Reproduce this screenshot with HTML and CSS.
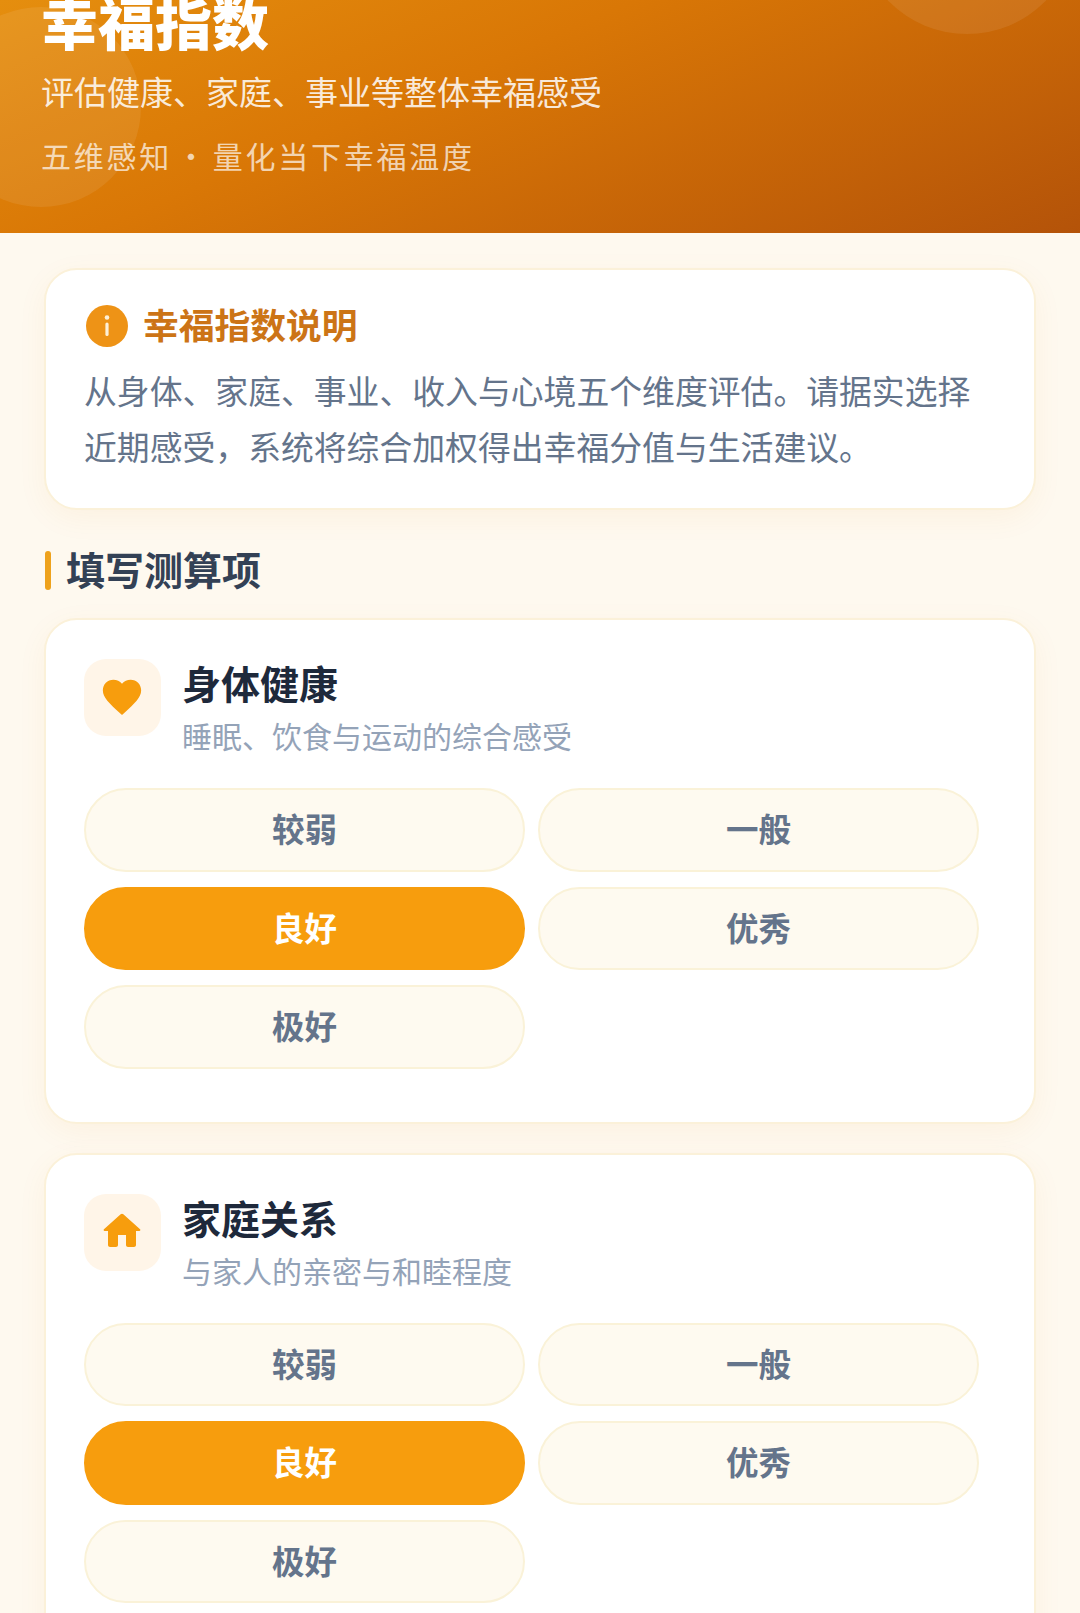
FILE: index.html
```html
<!DOCTYPE html>
<html lang="zh">

<head>
  <meta http-equiv="Content-Type" content="text/html; charset=UTF-8">
  <title>幸福指数</title>
  <link rel="stylesheet" href="styles.css">
</head>

<body>

  <div class="hero">
    <div class="circulo circulo-der"></div>
    <div class="circulo circulo-izq"></div>
    <h1>幸福指数</h1>
    <p class="hero-sub">评估健康、家庭、事业等整体幸福感受</p>
    <p class="hero-tag">五维感知 · 量化当下幸福温度</p>
  </div>

  <div class="contenido">

    <div class="tarjeta info">
      <div class="info-titulo">
        <svg class="info-icono" viewBox="0 0 42 42">
          <circle cx="21" cy="21" r="21" fill="#ee9316" />
          <rect x="19.4" y="17.5" width="3.2" height="13.5" rx="1.6" fill="#fdf0d8" />
          <circle cx="21" cy="12.5" r="2.3" fill="#fdf0d8" />
        </svg>
        <span>幸福指数说明</span>
      </div>
      <p>从身体、家庭、事业、收入与心境五个维度评估。请据实选择近期感受，系统将综合加权得出幸福分值与生活建议。</p>
    </div>

    <h2 class="seccion">填写测算项</h2>

    <div class="tarjeta item">
      <div class="item-cabecera">
        <div class="item-icono">
          <svg class="corazon" viewBox="0 0 24 24">
            <path d="M12 21.35l-1.45-1.32C5.4 15.36 2 12.28 2 8.5 2 5.42 4.42 3 7.5 3c1.74 0 3.41.81 4.5 2.09C13.09 3.81 14.76 3 16.5 3 19.58 3 22 5.42 22 8.5c0 3.78-3.4 6.86-8.55 11.54L12 21.35z" />
          </svg>
        </div>
        <div>
          <div class="item-titulo">身体健康</div>
          <div class="item-sub">睡眠、饮食与运动的综合感受</div>
        </div>
      </div>
      <div class="opciones">
        <div class="opcion">较弱</div>
        <div class="opcion">一般</div>
        <div class="opcion activa">良好</div>
        <div class="opcion">优秀</div>
        <div class="opcion">极好</div>
      </div>
    </div>

    <div class="tarjeta item">
      <div class="item-cabecera">
        <div class="item-icono">
          <svg viewBox="0 0 24 24">
            <path d="M10 19v-5h4v5c0 .55.45 1 1 1h3c.55 0 1-.45 1-1v-7h1.7c.46 0 .68-.57.33-.87L12.67 3.6c-.38-.34-.96-.34-1.34 0l-8.36 7.53c-.34.3-.13.87.33.87H5v7c0 .55.45 1 1 1h3c.55 0 1-.45 1-1z" />
          </svg>
        </div>
        <div>
          <div class="item-titulo">家庭关系</div>
          <div class="item-sub">与家人的亲密与和睦程度</div>
        </div>
      </div>
      <div class="opciones">
        <div class="opcion">较弱</div>
        <div class="opcion">一般</div>
        <div class="opcion activa">良好</div>
        <div class="opcion">优秀</div>
        <div class="opcion">极好</div>
      </div>
    </div>

  </div>

</body>

</html>
```

FILE: styles.css
```css
html,
body {
  height: 1613px;
  overflow: hidden;
}

body {
  margin: 0;
  background: #fef9ef;
  font-family: "Noto Sans CJK SC", "Noto Sans", sans-serif;
}

/* the page is scrolled down a little, so the top of the hero is out of view */
.hero {
  position: relative;
  overflow: hidden;
  height: 383px;
  margin-top: -150px;
  padding: 135px 41px 0;
  box-sizing: border-box;
  background: linear-gradient(157deg, #e58e0e 17.8%, #d97706 50%, #b45309 100%);
  color: #fff;
}

.circulo {
  position: absolute;
  border-radius: 50%;
  background: rgba(255, 255, 255, 0.08);
}

.circulo-der {
  width: 220px;
  height: 220px;
  top: -36px;
  right: 3px;
}

.circulo-izq {
  width: 200px;
  height: 200px;
  top: 157px;
  left: -59px;
}

.hero h1 {
  position: relative;
  margin: 0;
  font-size: 57px;
  line-height: 70px;
  font-weight: 900;
}

.hero-sub {
  position: relative;
  margin: 11px 0 0;
  font-size: 33px;
  line-height: 50px;
  color: rgba(255, 255, 255, 0.85);
}

.hero-tag {
  position: relative;
  margin: 16px 0 0;
  font-size: 30px;
  line-height: 46px;
  letter-spacing: 2.75px;
  word-spacing: -5.5px;
  color: rgba(255, 255, 255, 0.7);
}

.contenido {
  padding: 35px 44px 0;
}

.tarjeta {
  background: #fff;
  border: 2px solid #fbf1d9;
  border-radius: 33px;
  box-sizing: border-box;
  box-shadow: 0 8px 30px rgba(217, 119, 6, 0.06);
}

.info {
  height: 242px;
  padding: 35px 38px 0;
}

.info-titulo {
  display: flex;
  align-items: center;
  gap: 15px;
  height: 42px;
  font-size: 35.75px;
  font-weight: 700;
  color: #cc7416;
}

.info-titulo span {
  margin-bottom: 6px;
}

.info-icono {
  width: 42px;
  height: 42px;
  margin-left: 2px;
}

.info p {
  margin: 15px 0 0;
  font-size: 32.85px;
  line-height: 55.5px;
  color: #64748b;
}

.seccion {
  display: flex;
  align-items: flex-start;
  gap: 15px;
  height: 39px;
  margin: 41px 0 28px;
  font-size: 39px;
  line-height: 35px;
  font-weight: 700;
  color: #334155;
}

.seccion::before {
  content: "";
  width: 6px;
  height: 39px;
  margin-left: 1px;
  border-radius: 3px;
  background: #eea21c;
}

.item {
  padding: 39px 38px 53px;
  margin-bottom: 29px;
}

.item-cabecera {
  display: flex;
  gap: 21px;
  margin-bottom: 28px;
}

.item-icono {
  display: flex;
  align-items: center;
  justify-content: center;
  width: 77px;
  height: 77px;
  padding: 0 2px 2px 0;
  box-sizing: border-box;
  border-radius: 22px;
  background: #fff5e8;
}

.item-icono svg {
  width: 48px;
  height: 48px;
  fill: #f79d0d;
}

.item-icono .corazon {
  width: 46px;
  height: 46px;
}

.item-titulo {
  font-size: 39px;
  line-height: 46px;
  font-weight: 700;
  color: #1e293b;
}

.item-sub {
  margin-top: 5px;
  font-size: 30px;
  line-height: 50px;
  color: #94a3b8;
}

.opciones {
  display: grid;
  grid-template-columns: 441px 441px;
  column-gap: 13px;
  row-gap: 15px;
}

.opcion {
  height: 83.5px;
  line-height: 76.5px;
  box-sizing: border-box;
  border: 2px solid #faf2d8;
  border-radius: 42px;
  background: #fefaf0;
  text-align: center;
  font-size: 32.5px;
  font-weight: 700;
  color: #64748b;
}

.activa {
  border-color: #f79d0d;
  background: #f79d0d;
  color: #fff;
}
```
